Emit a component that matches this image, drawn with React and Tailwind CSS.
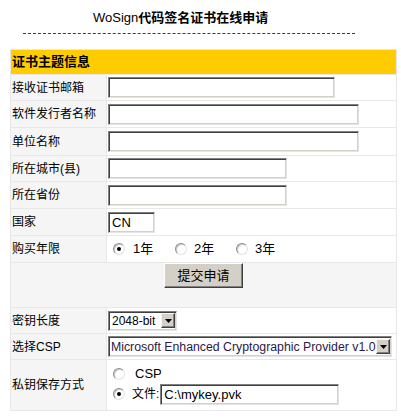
import React from "react"

const inset =
  "border border-t-[#808080] border-l-[#808080] border-b-[#e4e4e4] border-r-[#e4e4e4] shadow-[inset_1px_1px_0_#404040,inset_-1px_-1px_0_#d4d0c8]"

const Radio = ({ checked }) => (
  <span className="flex h-[12px] w-[12px] shrink-0 items-center justify-center rounded-full border border-t-[#8c8c8c] border-l-[#8c8c8c] border-b-[#e2e2e2] border-r-[#e2e2e2] bg-white shadow-[inset_1px_1px_0_#c8c8c8]">
    {checked && <span className="h-[4px] w-[4px] rounded-full bg-black" />}
  </span>
)

const Arrow = ({ className }) => (
  <span
    className={`flex shrink-0 items-center justify-center bg-[#d4d0c8] border border-t-[#f4f4f4] border-l-[#f4f4f4] border-b-[#404040] border-r-[#404040] shadow-[inset_-1px_-1px_0_#808080] ${className}`}
  >
    <svg width="7" height="4" viewBox="0 0 7 4">
      <path d="M0 0h7L3.5 4z" fill="#000" />
    </svg>
  </span>
)

const Row = ({ label, h, children }) => (
  <>
    <div className={`flex items-center bg-[#f5f5f5] pl-px ${h}`}>{label}</div>
    <div className={`flex items-center bg-white pl-px ${h}`}>{children}</div>
  </>
)

const TextInput = ({ className, value }) => (
  <input
    defaultValue={value}
    className={`h-[21px] bg-white pl-[3px] text-[13px] text-black outline-none ${inset} ${className}`}
  />
)

export default function App() {
  return (
    <div className="h-[418px] w-[401px] overflow-hidden bg-white font-['Liberation_Sans','Noto_Sans_CJK_SC',sans-serif] text-[12px] leading-[14px] text-black">
      <div className="mt-[10px] pl-[93px] text-[13px] leading-[16px]">
        <span>WoSign</span>
        <span className="font-bold">代码签名证书在线申请</span>
      </div>
      <div className="ml-[23px] mt-[7px] w-[332px] border-t border-dashed border-[#1a3c8c]" />

      <div className="ml-[10px] mt-[15px] grid w-[387px] grid-cols-[95px_289px] gap-px bg-[#e8e8e8] p-px">
        <div className="col-span-2 flex h-[24px] items-center bg-[#ffcc00] pl-px text-[13px] font-bold">
          证书主题信息
        </div>

        <Row label="接收证书邮箱" h="h-[25px]">
          <TextInput className="w-[227px]" />
        </Row>
        <Row label="软件发行者名称" h="h-[26px]">
          <TextInput className="w-[251px]" />
        </Row>
        <Row label="单位名称" h="h-[27px]">
          <TextInput className="w-[251px]" />
        </Row>
        <Row label="所在城市(县)" h="h-[25px]">
          <TextInput className="w-[179px]" />
        </Row>
        <Row label="所在省份" h="h-[26px]">
          <TextInput className="w-[179px]" />
        </Row>
        <Row label="国家" h="h-[26px]">
          <TextInput className="w-[47px]" value="CN" />
        </Row>
        <Row label="购买年限" h="h-[26px]">
          <div className="flex items-center pl-[5px] text-[13px]">
            <label className="flex w-[62px] items-center">
              <Radio checked />
              <span className="ml-[8px]">1年</span>
            </label>
            <label className="flex w-[61px] items-center">
              <Radio />
              <span className="ml-[7px]">2年</span>
            </label>
            <label className="flex items-center">
              <Radio />
              <span className="ml-[7px]">3年</span>
            </label>
          </div>
        </Row>

        <div className="col-span-2 flex h-[44px] justify-center bg-[#f5f5f5]">
          <button className="h-[25px] w-[79px] bg-[#d4d0c8] text-[13px] border border-t-white border-l-white border-b-[#404040] border-r-[#404040] shadow-[inset_-1px_-1px_0_#808080]">
            提交申请
          </button>
        </div>

        <Row label="密钥长度" h="h-[25px]">
          <div className={`flex h-[20px] w-[69px] items-center justify-between bg-white pl-[3px] pr-px text-[12px] ${inset}`}>
            <span className="whitespace-nowrap">2048-bit</span>
            <Arrow className="h-[15px] w-[14px]" />
          </div>
        </Row>
        <Row label="选择CSP" h="h-[25px]">
          <div className={`flex h-[21px] w-[284px] items-center justify-between bg-white pl-[2px] pr-px text-[12.3px] text-[#2c1848] ${inset}`}>
            <span className="whitespace-nowrap">Microsoft Enhanced Cryptographic Provider v1.0</span>
            <Arrow className="h-[15px] w-[14px]" />
          </div>
        </Row>
        <Row label="私钥保存方式" h="h-[50px]">
          <div className="flex flex-col pl-[5px] text-[13px]">
            <label className="flex h-[18px] items-center">
              <Radio />
              <span className="ml-[10px]">CSP</span>
            </label>
            <label className="flex h-[23px] items-center">
              <Radio checked />
              <span className="ml-[7px] text-[12px]">文件:</span>
              <TextInput className="ml-px w-[179px]" value={"C:\\mykey.pvk"} />
            </label>
          </div>
        </Row>
      </div>
    </div>
  )
}
